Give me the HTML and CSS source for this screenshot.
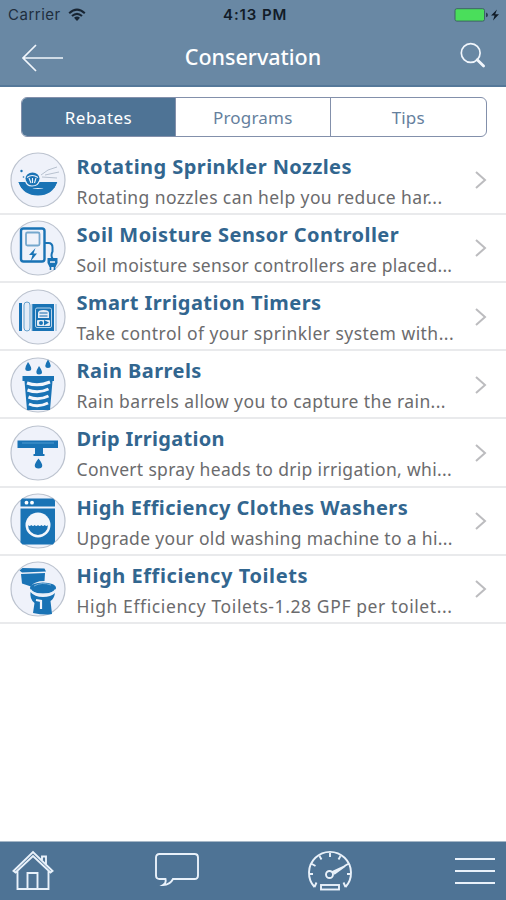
FILE: index.html
```html
<!DOCTYPE html>
<html lang="en">
<head>
<meta charset="utf-8">
<title>Conservation</title>
<link rel="stylesheet" href="styles.css">
</head>
<body>
<div class="app">
  <header class="top">
    <div class="status">
      <span class="carrier">Carrier</span>
      <svg class="wifi" width="18" height="14" viewBox="0 0 18 14" fill="none" stroke="#182533" stroke-width="2.1"><path d="M1.2 5.2Q9-2 16.8 5.2M4 8Q9 3.6 14 8"/><path d="M6 9.8Q9 7.3 12 9.8L9 13Z" fill="#182533" stroke="none"/></svg>
      <span class="clock">4:13 PM</span>
      <svg class="battery" width="46" height="16" viewBox="0 0 46 16"><rect x="1" y="1.7" width="29.5" height="12.4" rx="1.8" fill="#4ade5b" stroke="#3d6464"/><path d="M32 5.5q2 .6 2 2.4t-2 2.4Z" fill="#293f50"/><path d="M43 2.5 37 8.5h3.6L39 13.5l6-6.3h-3.8Z" fill="#101b27"/></svg>
    </div>
    <div class="nav">
      <svg class="back" width="43" height="30" viewBox="0 0 43 30" fill="none" stroke="#f1f6fc" stroke-width="1.7"><path d="M42 15H2M15 2 2 15l13 13"/></svg>
      <h1>Conservation</h1>
      <svg class="search" width="26" height="27" viewBox="0 0 26 27" fill="none" stroke="#f1f6fc"><circle cx="10.7" cy="11" r="9.4" stroke-width="1.7"/><path d="m17.2 17.7 6.4 6.4" stroke-width="2.8" stroke-linecap="round"/></svg>
    </div>
  </header>
  <nav class="tabs"><a class="active"><span>Rebates</span></a><a><span>Programs</span></a><a><span>Tips</span></a></nav>
  <main>
    <article class="row">
      <svg class="icon" viewBox="0 0 56 56"><circle class="disc" cx="28" cy="28" r="27"/><path class="fill" d="M8.500 30h7q3 7 12.500 7t12.500-7h6.700c-3.200 9-9.500 13.500-19.200 13.500S11.500 39 8.500 30Z"/><path class="fill" d="M8.500 30h38.700l-3 6H11.500Z"/><path d="M14.500 29.500q1 4.500 6.500 4.500t7.500-4.500" fill="none" stroke="#eff2fa" stroke-width="0"/><path d="M15.500 28q.5 6 6.500 6 6.500 0 7.500-6" fill="none" stroke="#eff2fa" stroke-width="1.200"/><ellipse class="fill" cx="22.500" cy="26.500" rx="7" ry="6"/><path d="m19 26 2 5m1.500-5v5m3.500-5-1.500 5M17 25.500q5-4 11 0" stroke="#eff2fa" stroke-width="1.100" fill="none"/><circle class="fill" cx="11.500" cy="19" r="1.200"/><circle class="fill" cx="13.500" cy="25" r=".8"/><path d="M31 23q6-6 16-8M35 23l14-3M32 25l15 1" fill="none" stroke="#a9b5c4" stroke-width=".8"/></svg>
      <div class="copy"><h2>Rotating Sprinkler Nozzles</h2><p>Rotating nozzles can help you reduce har...</p></div>
      <svg class="chev" viewBox="0 0 12 18"><path d="m1 1 9 8-9 8"/></svg>
    </article>
    <article class="row">
      <svg class="icon" viewBox="0 0 56 56"><circle class="disc" cx="28" cy="28" r="27"/><g class="line"><rect x="11" y="8.500" width="23.500" height="33" rx="2.500"/><rect x="16" y="12.500" width="13.500" height="13" rx="1.500" stroke="#75a7cd" stroke-width="1.8"/><path d="M35 23h3.500q4 0 4 4.500v4q-2 4 0 7" stroke-width="2"/><path d="M40.500 46v4m4-4v4" stroke-width="1.600"/></g><path class="fill" d="M37.500 38h10v5l-2 4h-6l-2-4ZM25.500 28 19 35h3.500l-2 6.500 6.500-8h-3.500Z"/><path d="M40 42h5" stroke="#eff2fa" stroke-width="1.500"/></svg>
      <div class="copy"><h2>Soil Moisture Sensor Controller</h2><p>Soil moisture sensor controllers are placed...</p></div>
      <svg class="chev" viewBox="0 0 12 18"><path d="m1 1 9 8-9 8"/></svg>
    </article>
    <article class="row">
      <svg class="icon" viewBox="0 0 56 56"><circle class="disc" cx="28" cy="28" r="27"/><path class="fill" d="M9 14h3v28H9zM22 15h22v27H22z"/><rect x="14" y="13" width="6" height="29" rx="3" fill="#e4ecf7" stroke="#67a1cd"/><path d="M22 15v27M46 15v27" stroke="#86b4d9"/><rect x="25.500" y="19" width="16" height="19.500" rx="1.500" fill="none" stroke="#b9d4ea"/><path d="M28 29v-5q0-3 5.500-3t5.500 3v5Z" fill="#e8eef7"/><path d="M29.500 24h8m-8 3h8" stroke="#5996c8" stroke-width="1.400"/><rect x="27" y="31" width="13" height="6" rx="1" fill="#e4edf6"/><path class="fill" d="m34 31 5 2.500-5 3Z"/><circle class="fill" cx="31" cy="34" r="2"/></svg>
      <div class="copy"><h2>Smart Irrigation Timers</h2><p>Take control of your sprinkler system with...</p></div>
      <svg class="chev" viewBox="0 0 12 18"><path d="m1 1 9 8-9 8"/></svg>
    </article>
    <article class="row">
      <svg class="icon" viewBox="0 0 56 56"><circle class="disc" cx="28" cy="28" r="27"/><path class="fill" d="M18 5q6.500 9 0 9-5.500 0 0-9ZM29 9q6 8.500 0 8.500-5.500 0 0-8.500ZM38 2.500q5.500 8.500 0 8.500-5.500 0 0-8.500ZM12.500 19h31.500v5h-1.500L40 53H17L14.500 24h-2Z"/><path d="M17 26q11 4 23-1M17.500 33q11 4 21-1M18.500 40q10 4 20-1M19 47q9 4 19-1" fill="none" stroke="#f3f6fc" stroke-width="3"/></svg>
      <div class="copy"><h2>Rain Barrels</h2><p>Rain barrels allow you to capture the rain...</p></div>
      <svg class="chev" viewBox="0 0 12 18"><path d="m1 1 9 8-9 8"/></svg>
    </article>
    <article class="row">
      <svg class="icon" viewBox="0 0 56 56"><circle class="disc" cx="28" cy="28" r="27"/><path class="fill" d="M7.500 15.500H48V23H7.500ZM25 23h8v6h1.500v2h-11v-2H25ZM28.500 33.500q7.500 9.500 0 10-7.500-.5 0-10Z"/><path d="M12 18h32" stroke="#4d9bd0"/></svg>
      <div class="copy"><h2>Drip Irrigation</h2><p>Convert spray heads to drip irrigation, whi...</p></div>
      <svg class="chev" viewBox="0 0 12 18"><path d="m1 1 9 8-9 8"/></svg>
    </article>
    <article class="row">
      <svg class="icon" viewBox="0 0 56 56"><circle class="disc" cx="28" cy="28" r="27"/><path class="fill" d="M12 5.500h31l2 2v6H10.500v-6ZM10.500 15.500H45v33l-2 3H12.500l-2-2Z"/><circle cx="16.500" cy="9.700" r="1.900" fill="#fff"/><circle cx="22" cy="9.700" r="1.900" fill="#fff"/><circle cx="28" cy="32" r="12.500" fill="#f3f6fc"/><path class="fill" d="M18 32q1.500 2 3.300 0 1.700 2 3.400 0 1.600 2 3.300 0 1.700 2 3.400 0 1.600 2 3.300 0 2 2 3.300 0a10 10 0 0 1-20 0Z"/></svg>
      <div class="copy"><h2>High Efficiency Clothes Washers</h2><p>Upgrade your old washing machine to a hi...</p></div>
      <svg class="chev" viewBox="0 0 12 18"><path d="m1 1 9 8-9 8"/></svg>
    </article>
    <article class="row">
      <svg class="icon" viewBox="0 0 56 56"><circle class="disc" cx="28" cy="28" r="27"/><path class="fill" d="m9.500 9.500 3-2.500 22 .5 1.500 3-24 1ZM11 13l24-1-.5 8Q24 20 21 25.500l-9-3Z"/><path class="fill" d="M20.500 31q4 5 12.500 5 8 0 12-4-1 6-4.500 8l1.500 13q-7 1.500-19-1l1.500-10q-5-4-4-11Z"/><ellipse cx="33" cy="27" rx="13" ry="5.500" fill="#1973b5"/><path d="M20.500 28.500q3 5 12.500 5t12.500-5" fill="none" stroke="#e5eef8" stroke-width="1.400"/><path d="M24 25q8-4.500 17-1" fill="none" stroke="#72add8"/><path d="m26 39 5 1v8" fill="none" stroke="#f3f6fc" stroke-width="2.200"/></svg>
      <div class="copy"><h2>High Efficiency Toilets</h2><p>High Efficiency Toilets-1.28 GPF per toilet...</p></div>
      <svg class="chev" viewBox="0 0 12 18"><path d="m1 1 9 8-9 8"/></svg>
    </article>
  </main>
  <footer class="bar">
    <svg width="42" height="42" viewBox="0 0 42 42"><path d="M1.500 21 21 2l19.500 19-2 1.500L21 6 3.500 22.500ZM5.500 21v18h31V21M15.500 39V23h10v16M30 10V6.500h4V14"/></svg>
    <svg width="46" height="38" viewBox="0 0 46 38"><path d="M5.500 2h35Q44 2 44 5.500v18q0 3.500-3.500 3.500H19q-3 6-10 6 3.500-2 2.500-6h-6Q2 27 2 23.500v-18Q2 2 5.500 2Z"/></svg>
    <svg width="46" height="42" viewBox="0 0 46 42"><path d="M7.500 37a21 21 0 1 1 31 0M7.500 37l2-4.500M38.500 37l-2-4.500M2 24h4m38 0h-4M23 3v4M12.500 6l2 3.500M33.500 6l-2 3.500M5 14l3.500 2M41 14l-3.500 2"/><circle cx="22.500" cy="24.500" r="3.500"/><path d="m25 22 13-6-11 8" fill="#e9f1fa"/><rect x="14" y="35" width="18" height="4.500"/></svg>
    <svg width="40" height="30" viewBox="0 0 40 30"><path d="M0 3h40M0 15h40M0 27h40"/></svg>
  </footer>
</div>
</body>
</html>
```
FILE: styles.css
```css
* { box-sizing: border-box; }
body { margin: 0; background: #fff; font-family: "Noto Sans", sans-serif; }
h1, h2, p { margin: 0; font-weight: 400; }
.app { width: 506px; height: 900px; display: flex; flex-direction: column; overflow: hidden; }
.top { height: 87px; flex: none; background: #6988a4; border-bottom: 2px solid #557899; }
.status { height: 29px; display: grid; grid-template-columns: 60px 1fr 72px 1fr 46px; align-items: center; padding: 0 6px 0 8px; font: 15px Inter, sans-serif; color: #202e3e; }
.carrier { letter-spacing: .5px; }
.clock { font-weight: 600; letter-spacing: .9px; margin-left: -2px; color: #121c28; white-space: nowrap; }
.battery { grid-column: 5; }
.nav { display: grid; grid-template-columns: 60px 1fr 60px; align-items: center; height: 57px; padding: 0 20px; }
.nav h1 { text-align: center; font-size: 21.5px; line-height: 30px; font-weight: 500; color: #fff; padding-bottom: 2px; }
.back { margin-left: 1px; }
.search { justify-self: end; margin-top: -4px; }
.tabs { flex: none; display: grid; grid-template-columns: 153px 154.5px 1fr; margin: 10px 19px 9px 21px; width: 466px; height: 40px; border: 1.5px solid #8390ab; border-radius: 6px; overflow: hidden; }
.tabs a { display: flex; justify-content: center; align-items: center; color: #65809d; font-size: 17px; letter-spacing: .2px; }
.tabs a + a { border-left: 1px solid #8390ab; }
.tabs .active { background: #4e7395; color: #fff; letter-spacing: .5px; }
main { padding-top: .6px; }
.row { height: 68.2px; display: flex; align-items: center; padding: 1px 19px 0 10px; border-bottom: 2px solid #e9eaec; }
.icon { width: 56px; height: 56px; flex: none; }
.disc { fill: #eff2fa; stroke: #bcc3cf; stroke-width: 1.2; }
.fill { fill: #1973b5; }
.line { fill: none; stroke: #1973b5; stroke-width: 2.4; }
.copy { flex: 1; margin-left: 10.5px; padding-top: 2px; white-space: nowrap; }
.copy h2 { font-size: 20px; line-height: 31px; font-weight: 700; color: #32668f; letter-spacing: .44px; }
.copy p { font-size: 17.5px; line-height: 30px; color: #6b6b6d; letter-spacing: .4px; }
.row:nth-child(2) p { letter-spacing: .26px; }
.row:nth-child(3) p { letter-spacing: .45px; }
.row:nth-child(5) h2 { letter-spacing: .3px; }
.row:nth-child(5) p, .row:nth-child(6) p { letter-spacing: .32px; }
.row:nth-child(7) h2 { letter-spacing: .58px; }
.row:nth-child(7) p { letter-spacing: .6px; }
.chev { width: 12px; height: 18px; fill: none; stroke: #bcbcbf; stroke-width: 2; }
.bar { margin-top: auto; height: 59px; flex: none; background: #4e7395; border-top: 1.5px solid #a6b7c7; display: grid; grid-template-columns: 142px 153px 1fr 40px; align-items: center; padding: 0 11px 0 12px; }
.bar svg { fill: none; stroke: #e9f1fa; stroke-width: 1.9; }
```
